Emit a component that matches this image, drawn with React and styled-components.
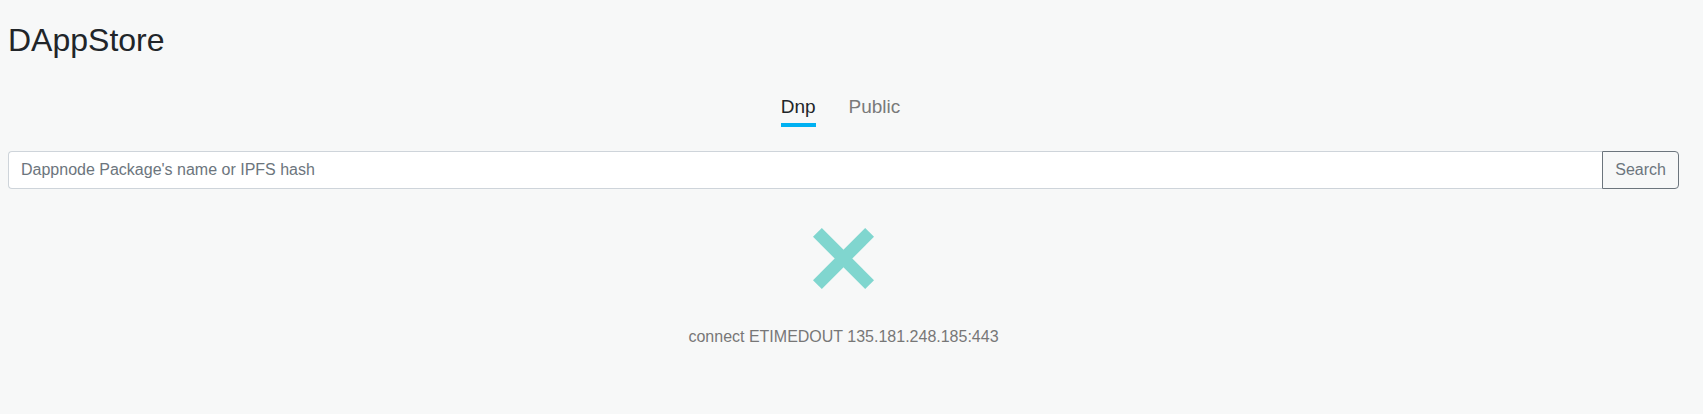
import React, { useState } from 'react';
import styled, { createGlobalStyle } from 'styled-components';

const GlobalStyle = createGlobalStyle`
  html, body {
    margin: 0;
    background: #f7f8f8;
    font-family: "Liberation Sans", Arial, sans-serif;
  }
`;

const Page = styled.div`
  display: flex;
  flex-direction: column;
  padding: 21px 24px 40px 8px;
  min-height: 414px;
  box-sizing: border-box;
`;

const Title = styled.h1`
  margin: 0;
  font-size: 32px;
  line-height: 38px;
  font-weight: 400;
  color: #212529;
`;

const Tabs = styled.div`
  display: flex;
  justify-content: center;
  gap: 33px;
  margin-top: 37px;
  padding-right: 6px;
`;

const Tab = styled.div`
  font-size: 19px;
  line-height: 22px;
  padding-bottom: 5px;
  cursor: pointer;
  color: ${({ $active }) => ($active ? '#212529' : '#7a7a7a')};
  border-bottom: 4px solid ${({ $active }) => ($active ? '#00b1f2' : 'transparent')};
`;

const SearchBar = styled.div`
  display: flex;
  margin-top: 24px;
  height: 38px;
`;

const SearchInput = styled.input`
  flex: 1;
  min-width: 0;
  box-sizing: border-box;
  height: 38px;
  padding: 6px 12px;
  font-family: inherit;
  font-size: 16px;
  color: #495057;
  background: #fff;
  border: 1px solid #ced4da;
  border-right: none;
  border-radius: 4px 0 0 4px;
  outline: none;

  &::placeholder {
    color: #6c757d;
  }
`;

const SearchButton = styled.button`
  box-sizing: border-box;
  height: 38px;
  padding: 6px 12px;
  font-family: inherit;
  font-size: 16px;
  color: #6c757d;
  background: transparent;
  border: 1px solid #6c757d;
  border-radius: 0 4px 4px 0;
  cursor: pointer;
`;

const ErrorBox = styled.div`
  display: flex;
  flex-direction: column;
  align-items: center;
  margin-top: 39px;
`;

const ErrorIcon = styled.svg`
  width: 61px;
  height: 61px;
  display: block;
`;

const ErrorText = styled.div`
  margin-top: 38px;
  font-size: 16px;
  line-height: 19px;
  color: #777;
`;

export default function App() {
  const [tab, setTab] = useState('Dnp');

  return (
    <>
      <GlobalStyle />
      <Page>
        <Title>DAppStore</Title>
        <Tabs>
          {['Dnp', 'Public'].map((t) => (
            <Tab key={t} $active={t === tab} onClick={() => setTab(t)}>
              {t}
            </Tab>
          ))}
        </Tabs>
        <SearchBar>
          <SearchInput placeholder="Dappnode Package's name or IPFS hash" />
          <SearchButton>Search</SearchButton>
        </SearchBar>
        <ErrorBox>
          <ErrorIcon viewBox="0 0 61 61">
            <g stroke="#80d6cf" strokeWidth="12.5" strokeLinecap="butt">
              <line x1="4.4" y1="4.4" x2="56.6" y2="56.6" />
              <line x1="56.6" y1="4.4" x2="4.4" y2="56.6" />
            </g>
          </ErrorIcon>
          <ErrorText>connect ETIMEDOUT 135.181.248.185:443</ErrorText>
        </ErrorBox>
      </Page>
    </>
  );
}
